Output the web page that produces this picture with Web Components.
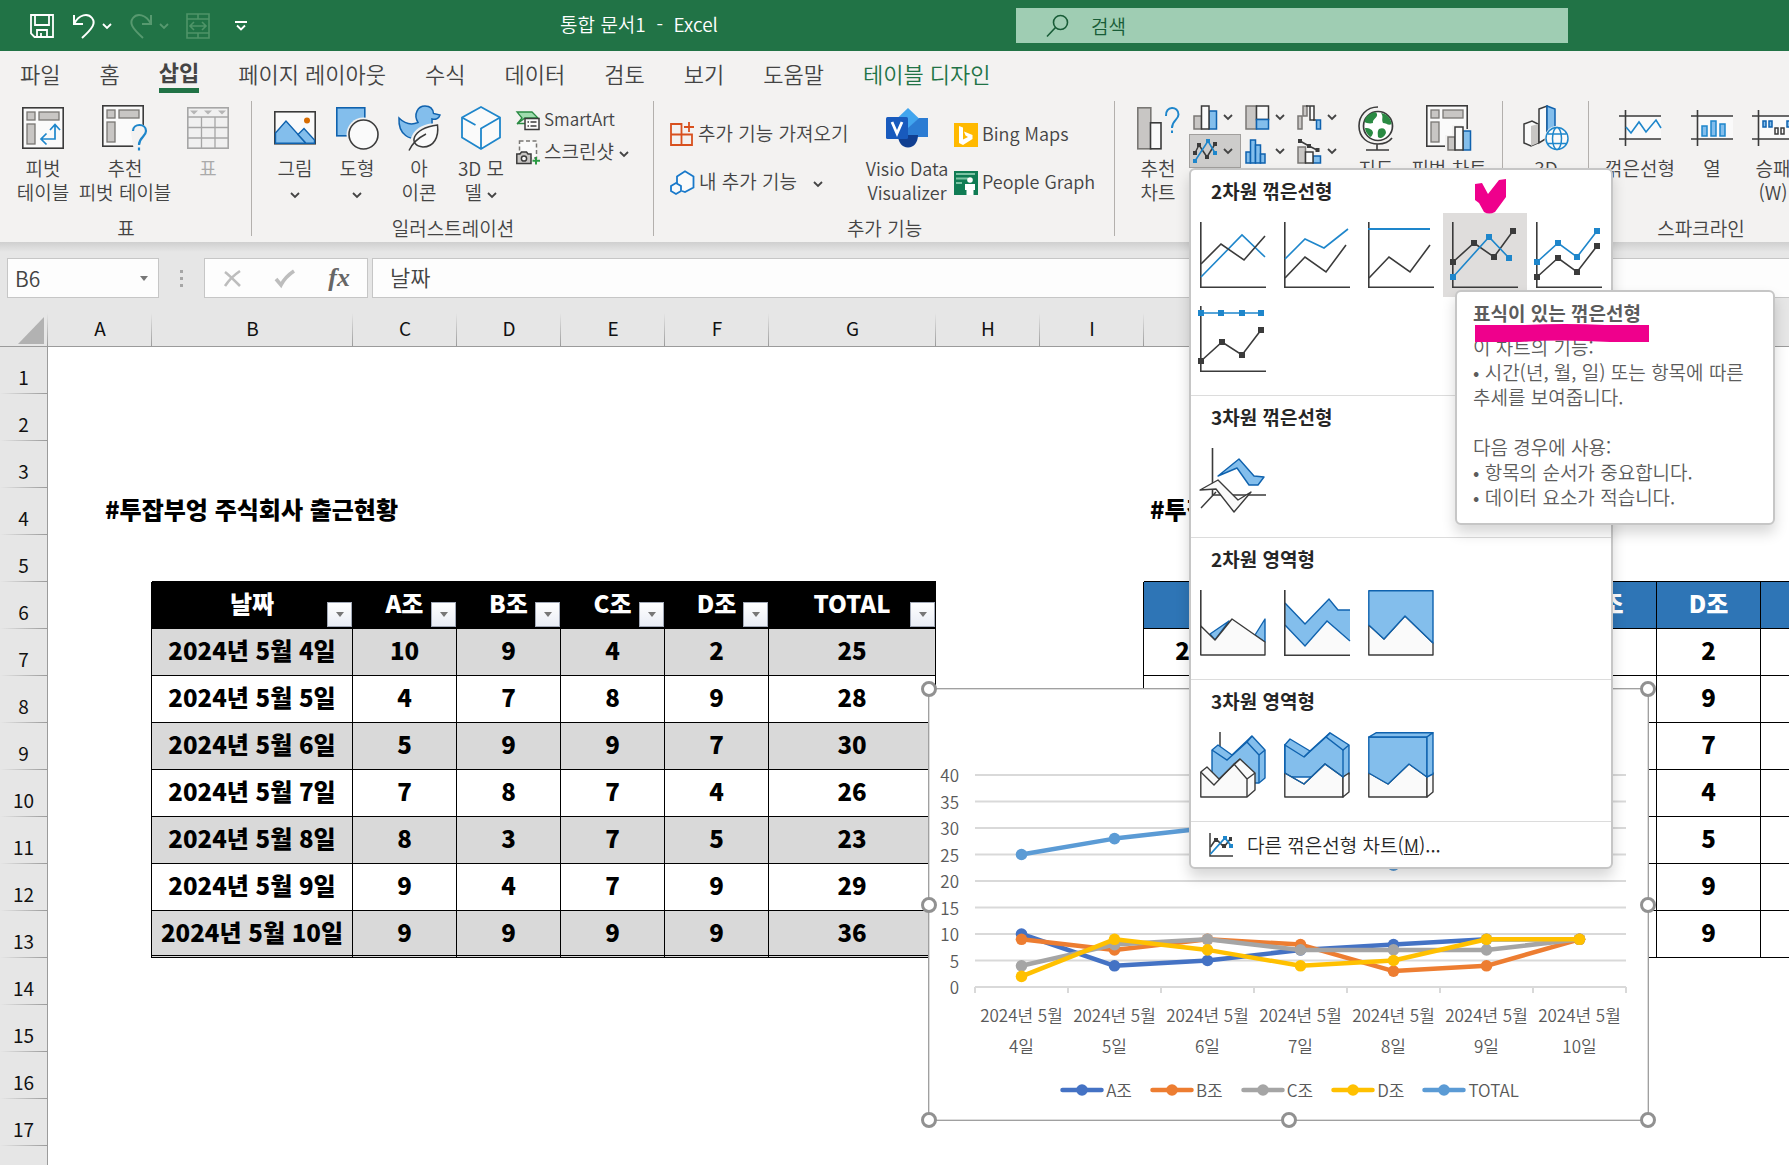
<!DOCTYPE html>
<html lang="ko">
<head>
<meta charset="utf-8">
<title>통합 문서1 - Excel</title>
<style>
  html, body { margin: 0; height: 100%; }
  body { font-family: "Noto Sans CJK KR", "Noto Sans", sans-serif; font-size: 19px; font-weight: 350; color: #444; overflow: hidden; }
</style>
</head>
<body>
<excel-app></excel-app>
<script>
const G = '#3b3b3b', B = '#1e86cb', D = '#0f62ae', F = '#83beec', W = '#fafafa', S = '#c8c6c4';
const sq = (pts, c) => pts.map(([x, y]) => `<rect x="${x - 3}" y="${y - 3}" width="6" height="6" fill="${c}"/>`).join('');
const pl = (pts, c, w = 1.6) => `<polyline points="${pts.map(p => p.join()).join(' ')}" fill="none" stroke="${c}" stroke-width="${w}"/>`;
const pg = (pts, f, c, w = 1.4) => `<polygon points="${pts}" fill="${f}" stroke="${c}" stroke-width="${w}" stroke-linejoin="round"/>`;
const axis = `<path d="M.8 0V65.2H66" fill="none" stroke="${G}" stroke-width="1.6"/>`;
const sheetIcon = `<rect x=".8" y=".8" width="40.4" height="40.4" fill="${W}" stroke="${G}" stroke-width="1.6"/>
  <g fill="${S}" stroke="#797774" stroke-width="1.3"><rect x="5" y="5" width="8" height="8"/><rect x="17" y="5" width="20" height="8"/><rect x="5" y="17" width="8" height="20"/></g>`;

/* name: [width, height, markup] */
const ICONS = {
  chevron: [10, 6, `<path d="M1 1l4 4 4-4" fill="none" stroke="currentColor" stroke-width="1.8"/>`],
  save: [24, 24, `<g fill="none" stroke="#fff" stroke-width="1.8"><path d="M1 1H23V23H4.500L1 19.500Z"/><path d="M5 1V11H19V1M7 23V16H17V23M11 23V19"/></g>`],
  undo: [24, 26, `<g fill="none" stroke="#fff" stroke-width="2"><path d="M2 2V11H11"/><path d="M2 11C7 1 16 0 20 5C24 10 21 15 10 25"/></g>`],
  redo: [24, 26, `<g fill="none" stroke="#57996f" stroke-width="2"><path d="M22 2V11H13"/><path d="M22 11C17 1 8 0 4 5C0 10 3 15 14 25"/></g>`],
  merge: [24, 26, `<g fill="none" stroke="#4f9468" stroke-width="1.6"><path d="M1 1H23V25H1ZM1 6H23M1 20H23M12 1V6M12 20V25"/><path d="M4 13H20M8 9L4 13L8 17M16 9L20 13L16 17"/></g>`],
  qat: [12, 10, `<path d="M0 1H12M2 4.500L6 8.500L10 4.500" fill="none" stroke="#fff" stroke-width="1.800"/>`],
  search: [24, 24, `<g fill="none" stroke="#185c37" stroke-width="1.6"><circle cx="14.500" cy="8.500" r="7"/><path d="M9.500 13.500L1 22.500"/></g>`],
  pivot: [42, 42, sheetIcon + `<g fill="none" stroke="${B}" stroke-width="1.700"><path d="M33 18V32H19M28 23L33 17.500L38 23M24.500 26.500L19 32L24.500 37.500"/></g>`],
  recpivot: [46, 46, sheetIcon + `<path d="M29 28C27 18 45 14 46 28V46H32Z" fill="#f3f2f1"/><g fill="none" stroke="${B}" stroke-width="2.200"><path d="M31 26C31 18 44 18 44 26C44 32 37 32 37 40"/><path d="M37 42.500V45.500"/></g>`],
  table: [42, 42, `<rect x=".8" y=".8" width="40.400" height="40.400" fill="#f0f0f0" stroke="#a6a6a6" stroke-width="1.600"/><path d="M1 10H41M1 20.500H41M1 31H41M14.500 10V41M28 10V41" stroke="#a6a6a6" stroke-width="1.300"/><path d="M3 3.500H11L7 7.500ZM17 3.500H25L21 7.500ZM31 3.500H39L35 7.500Z" fill="#b5b5b5"/>`],
  picture: [42, 34, `<rect x=".8" y=".8" width="40.400" height="32" fill="${W}" stroke="${G}" stroke-width="1.600"/><path d="M1.500 22L12 10L32 32.200H1.500Z" fill="${F}" stroke="${D}" stroke-width="1.400"/><path d="M24 23.500L30 17.500L40.500 29V32.200H32Z" fill="${F}" stroke="${D}" stroke-width="1.400"/><circle cx="33" cy="9.500" r="3" fill="#d86c00"/>`],
  shapes: [43, 43, `<rect x=".8" y=".8" width="28" height="28" fill="${F}" stroke="${D}" stroke-width="1.600"/><circle cx="27.500" cy="27.500" r="17" fill="#f3f2f1"/><circle cx="27.500" cy="27.500" r="14.500" fill="${W}" stroke="${G}" stroke-width="1.600"/>`],
  duck: [43, 46, `<path d="M1 13C8 20 14 20 20 17.500C15 9 20 1 27 1C32 1 35 4 35.500 8.500L42 10C41 13 38 15 34 14C35 21 33 30 24 33C12 36 0 30 1 13Z" fill="${F}" stroke="${D}" stroke-width="1.500"/><path d="M12 44C11 26 22 18 41 18V30C40 43 27 47 18 43Z" fill="#f3f2f1"/><path d="M39.500 20C41 32 36 42 25 42C10 41 13 23 39.500 20Z" fill="${W}" stroke="${G}" stroke-width="1.500"/><path d="M11 45.500C14 39 20 33 28 29" fill="none" stroke="${G}" stroke-width="1.500"/>`],
  cube: [40, 44, `<path d="M20 1L39 11.500V31.500L20 43L1 31.500V11.500Z" fill="${W}"/><path d="M20 1L39 11.500V31.500L20 43L1 31.500V11.500ZM1 11.500L14.500 19M39 11.500L20 22.500V43" fill="none" stroke="${B}" stroke-width="1.800"/>`],
  smartart: [24, 20, `<path d="M1 1H16L22 7H9L1 13L6 7Z" fill="#9fdcae" stroke="#2a8a43" stroke-width="1.300"/><path d="M1 12.500H9" stroke="#2a8a43" stroke-width="1.500"/><rect x="9" y="7.500" width="14" height="11" fill="${W}" stroke="${G}" stroke-width="1.500"/><path d="M11.500 11H13M14.500 11H20.500M11.500 15H13M14.500 15H20.500" stroke="${G}" stroke-width="1.400"/>`],
  shot: [24, 25, `<rect x="3.500" y="1" width="17" height="17" fill="${W}" stroke="#797774" stroke-width="1.500" stroke-dasharray="4 2.500"/><path d="M.8 14H4L5.500 12H10.500L12 14H15V23.500H.8Z" fill="${S}" stroke="${G}" stroke-width="1.500"/><circle cx="8" cy="18.500" r="2.600" fill="${W}" stroke="${G}" stroke-width="1.500"/><path d="M20 17V24.500M16.500 20.800H24" stroke="#2a9a43" stroke-width="2"/>`],
  getaddin: [24, 24, `<g fill="none" stroke="#d8501e" stroke-width="1.800"><path d="M1 2H11.500V23H1ZM1 12.500H22V23H11.500M19 0V10M14 5H24"/></g>`],
  myaddin: [25, 25, `<g fill="${W}" stroke="#1979ca" stroke-width="1.800"><path d="M7 13V6.500L15 1.200L23.500 6.500V17.500L15 22L12 21"/><path d="M6 13L11 16V21L6 24L1 21V16Z"/></g>`],
  visio: [42, 40, `<path d="M22 0L33 10.500L22 21L11 10.500Z" fill="#41a5ee"/><path d="M33 10H42V29H22V20Z" fill="#2b7cd3"/><path d="M14 27H32C32 34 28 39.500 22 39.500C16 39.500 12 34 12 27Z" fill="#103f91"/><rect x="0" y="9" width="22" height="22" rx="1.500" fill="#185abd"/><path d="M6 14L11 25.500L16 14" fill="none" stroke="#fff" stroke-width="2.800"/>`],
  bing: [24, 24, `<rect width="24" height="24" fill="#ffb900"/><path d="M5 3L9 4.500V16.500L14 14L11.500 12.500L10 8.500L18.500 12V16L9 22L5 20Z" fill="#fff"/>`],
  people: [24, 24, `<rect width="24" height="24" fill="#107c54"/><path d="M2 3H21M2 7.500H14M2 12H8" stroke="#7cc3a4" stroke-width="2"/><circle cx="16" cy="9" r="2.800" fill="#fff"/><path d="M11 13H21V19H19.500V24H12.500V19H11Z" fill="#fff"/>`],
  recchart: [43, 43, `<rect x=".8" y=".8" width="13" height="41" fill="${S}" stroke="#797774" stroke-width="1.600"/><rect x="13.500" y="15.800" width="10.500" height="26" fill="${W}" stroke="${G}" stroke-width="1.600"/><g fill="none" stroke="${B}" stroke-width="2"><path d="M29 9C28 -1.500 41.500 -1.500 41.500 7.500C41.500 13 35 13 35 21"/><path d="M35 23.500V26"/></g>`],
  col: [25, 25, `<rect x="1" y="11" width="7.500" height="13" fill="${S}" stroke="#797774" stroke-width="1.500"/><rect x="16" y="6" width="7.500" height="18" fill="${F}" stroke="${D}" stroke-width="1.500"/><rect x="8.500" y="1" width="7.500" height="23" fill="${W}" stroke="${G}" stroke-width="1.500"/>`],
  tree: [25, 25, `<rect x="1" y="1" width="10.500" height="23" fill="${S}" stroke="#797774" stroke-width="1.500"/><rect x="11.500" y="1" width="12" height="13.500" fill="${W}" stroke="${G}" stroke-width="1.500"/><rect x="11.500" y="14.500" width="12" height="9.500" fill="${F}" stroke="${D}" stroke-width="1.500"/>`],
  fall: [25, 25, `<g stroke-width="1.500"><path d="M1 24V11H5V24Z" fill="${S}" stroke="#797774"/><path d="M6 1V11H10V1Z" fill="${S}" stroke="#797774"/><path d="M9 1H17V15H13V1" fill="${W}" stroke="${G}"/><path d="M16 15H19" stroke="${G}"/><rect x="19.500" y="15" width="4" height="9" fill="${F}" stroke="${D}"/></g>`],
  line: [25, 25, pl([[2, 14], [6, 6], [14, 18], [22, 5]], G, 1.5) + pl([[2, 22], [15, 2], [22, 14]], B, 1.5) + [[2, 14], [6, 6], [14, 18], [22, 5]].map(p => `<rect x="${p[0] - 2}" y="${p[1] - 2}" width="4" height="4" fill="${G}"/>`).join('') + [[2, 22], [15, 2], [22, 14]].map(p => `<rect x="${p[0] - 2}" y="${p[1] - 2}" width="4" height="4" fill="${B}"/>`).join('')],
  hist: [25, 25, `<g fill="${F}" stroke="${D}" stroke-width="1.500"><rect x="1" y="13" width="4.500" height="11"/><rect x="5.500" y="1" width="5" height="23"/><rect x="10.500" y="6" width="5" height="18"/><rect x="15.500" y="15" width="4.500" height="9"/></g>`],
  combo: [25, 25, `<rect x="1" y="8" width="7.500" height="16" fill="${S}" stroke="#797774" stroke-width="1.500"/><rect x="16" y="17" width="7.500" height="7" fill="${F}" stroke="${D}" stroke-width="1.500"/><rect x="8.500" y="13" width="7.500" height="11" fill="${W}" stroke="${G}" stroke-width="1.500"/><path d="M3 2L12 7L22 12" fill="none" stroke="${G}" stroke-width="1.500"/><path d="M1 0H5V4H1ZM10 5H14V9H10ZM18.500 9H22.500V13H18.500Z" fill="${G}"/>`],
  globe: [37, 45, `<circle cx="20" cy="20" r="14.500" fill="#fff" stroke="${G}" stroke-width="1.700"/><path d="M9 10C14 6 18 5 19 8C20 12 14 13 15 17C12 18 8 17 6.500 16C7 13 8 11 9 10ZM23 7C29 8 33 12 33.500 18C31 20 28 17 25 17C23 13 26 11 23 7ZM7 22C12 22 15 24 15 27C14 30 13 31 12 31C9 28 7 25 7 22ZM21 23C25 21 28 23 28 27C26 32 22 33 20 31C20 28 19 26 21 23Z" fill="#2a8a43"/><path d="M20 1C8 1 1 10 1 20C1 32 10 38 20 38C27 38 31 36 34 32M19 38V44M8 44H31" fill="none" stroke="${G}" stroke-width="1.600"/>`],
  pivotchart: [46, 46, sheetIcon + `<path d="M19 46V30H26V20H36V24H46V46Z" fill="#f3f2f1"/><rect x="22" y="32" width="7" height="13" fill="${S}" stroke="#797774" stroke-width="1.500"/><rect x="37" y="26" width="7.500" height="19" fill="${F}" stroke="${D}" stroke-width="1.500"/><rect x="29" y="22" width="8" height="23" fill="${W}" stroke="${G}" stroke-width="1.500"/>`],
  map3d: [46, 46, `<path d="M1 19L9 16L15 19V38L8 41L1 38Z" fill="${W}" stroke="${G}" stroke-width="1.500"/><path d="M8 21L15 19V38L8 41Z" fill="${S}"/><path d="M16 4L24 1V33L16 38Z" fill="${W}" stroke="${G}" stroke-width="1.500"/><path d="M24 1L32 4V32L24 35Z" fill="${F}" stroke="${D}" stroke-width="1.500"/><circle cx="34" cy="33.500" r="12.500" fill="#f3f2f1"/><g fill="${W}" stroke="${B}" stroke-width="1.500"><circle cx="34" cy="33.500" r="11"/><ellipse cx="34" cy="33.500" rx="4.500" ry="11"/><path d="M24.500 29H43.500M24.500 38.500H43.500"/></g>`],
  spline: [42, 38, `<rect x="6" y="7" width="36" height="23" fill="${W}"/><path d="M6.500 1V37M0 7H42M0 30H42" stroke="${G}" stroke-width="1.600"/><path d="M7 18L12 24L20 13L27 23L37 11L42 19" fill="none" stroke="${B}" stroke-width="1.600"/>`],
  spcol: [42, 38, `<rect x="6" y="7" width="36" height="23" fill="${W}"/><path d="M6.500 1V37M0 7H42M0 30H42" stroke="${G}" stroke-width="1.600"/><g fill="${F}" stroke="${B}" stroke-width="1.500"><rect x="11" y="17" width="5" height="10"/><rect x="20" y="12" width="5" height="15"/><rect x="29" y="15" width="5" height="12"/></g>`],
  spwin: [42, 38, `<rect x="6" y="7" width="36" height="23" fill="${W}"/><path d="M6.500 1V37M0 7H42M0 30H42" stroke="${G}" stroke-width="1.600"/><g fill="${F}" stroke="${D}" stroke-width="1.500"><rect x="11" y="12" width="3" height="6"/><rect x="17" y="12" width="3" height="6"/><rect x="35" y="12" width="3" height="6"/></g><g fill="${W}" stroke="${G}" stroke-width="1.500"><rect x="23" y="19" width="3" height="6"/><rect x="29" y="19" width="3" height="6"/></g>`],
  cancel: [19, 17, `<path d="M2 2C6 5 12 11 17 16M17 1C11 5 6 10 2 16" fill="none" stroke="#bdbdbd" stroke-width="2.600"/>`],
  enter: [20, 17, `<path d="M1 9L6 15C9 9 13 5 19 1" fill="none" stroke="#bdbdbd" stroke-width="3.600"/>`],
  drop: [8, 5, `<path d="M0 0H8L4 5Z" fill="#777"/>`],
  corner: [26, 27, `<path d="M26 0V27H0Z" fill="#b2b2b2"/>`],
  gLine: [66, 66, axis + pl([[1, 55], [42, 13], [65, 35]], B) + pl([[1, 42], [21, 22], [44, 38], [65, 14]], G)],
  gStack: [66, 66, axis + pl([[1, 37], [21, 17], [40, 26], [64, 7]], B) + pl([[1, 56], [21, 35], [42, 50], [62, 23]], G)],
  gFull: [66, 66, axis + pl([[0, 7], [62, 7]], B, 2) + pl([[1, 56], [21, 35], [42, 50], [62, 23]], G)],
  gLineM: [66, 66, axis + pl([[1, 40], [22, 21], [42, 35], [61, 9]], G) + pl([[1, 55], [37, 15], [57, 36]], B) + sq([[1, 40], [22, 21], [42, 35], [61, 9]], G) + sq([[1, 55], [37, 15], [57, 36]], B)],
  gStackM: [66, 66, axis + pl([[1, 40], [22, 21], [41, 35], [61, 9]], B) + pl([[1, 55], [22, 36], [41, 50], [61, 24]], G) + sq([[1, 40], [22, 21], [41, 35], [61, 9]], B) + sq([[1, 55], [22, 36], [41, 50], [61, 24]], G)],
  gFullM: [66, 66, axis + pl([[1, 7], [61, 7]], B) + pl([[1, 55], [22, 36], [42, 49], [61, 24]], G) + sq([[1, 7], [21, 7], [42, 7], [61, 7]], B) + sq([[1, 55], [22, 36], [42, 49], [61, 24]], G)],
  g3dLine: [66, 66, `<path d="M12.500 0V47H66" fill="none" stroke="${G}" stroke-width="1.600"/>` + pg('18,28 39,11 54,28 64,29 58,37 49,37 37,20', F, D) + `<path d="M1 60L16 44" stroke="${G}" stroke-width="1.400"/>` + pg('0,42 18,32 38,52 51,44 34,64 16,41', W, G)],
  gArea: [66, 66, `<path d="M.8 0V65" stroke="${G}" stroke-width="1.600"/>` + pg('10,44 29,31 15,50', F, D) + pg('55,45 65,29 65,52', F, D) + pg('.8,36 15,50 32,29 65,52 65,65 .8,65', W, G)],
  gAreaS: [66, 66, `<path d="M1 35L21 56L43 31L66 51V65H1Z" fill="${W}"/><path d="M1 13L21 34L45 9L54 20H66V51L43 31L21 56L1 35Z" fill="${F}"/>` + pl([[1, 13], [21, 34], [45, 9], [54, 20], [66, 20]], D, 1.4) + pl([[1, 35], [21, 56], [43, 31], [66, 51]], D, 1.4) + axis],
  gAreaF: [66, 66, pg('.8,35 16,49 37,26 65,53 65,65 .8,65', W, G) + pg('.8,.8 65,.8 65,53 37,26 16,49 .8,35', F, D)],
  g3dArea: [66, 66, `<path d="M20 0V16" stroke="${G}" stroke-width="1.500"/>` + pg('12,18 18,13 32,23 52,4 65,18 65,46 59,51 12,51', F, D) + pl([[12, 18], [27, 28], [47, 10], [59, 23], [59, 51]], D, 1.4) + pl([[47, 10], [52, 4]], D, 1.4) + pl([[59, 23], [65, 18]], D, 1.4) + pg('.8,40 7,35 19,47 40,27 55,41 55,58 47,65 .8,65', W, G) + pl([[0.8, 40], [14, 53], [34, 32], [47, 47], [47, 65]], G, 1.4) + pl([[34, 32], [40, 27]], G, 1.4) + pl([[47, 47], [55, 41]], G, 1.4)],
  g3dAreaS: [66, 66, pg('.8,13 6,7 26,19 46,.8 65,13 65,42 59,45 .8,45', F, D) + pg('.8,41 20,52 41,32 59,45 59,65 .8,65', W, G) + pg('59,45 65,41 65,60 59,65', W, G) + pl([[0.8, 41], [20, 52], [41, 32], [59, 45], [59, 18]], D, 1.4) + pl([[0.8, 41], [0.8, 13], [20, 25], [42, 5], [59, 18], [65, 13]], D, 1.4) + pl([[42, 5], [46, 1]], D, 1.4) + pl([[20, 25], [26, 19]], D, 1.4)],
  g3dAreaF: [66, 66, pg('.8,41 20,52 41,32 59,45 59,65 .8,65', W, G) + pg('59,45 65,41 65,60 59,65', W, G) + pg('.8,5 59,5 59,45 41,32 20,52 .8,41', F, D) + pg('.8,5 8,.8 65,.8 59,5', F, D) + pg('59,5 65,.8 65,42 59,45', F, D)],
  more: [24, 24, `<path d="M1 0V23H24" fill="none" stroke="${G}" stroke-width="1.500"/>` + pl([[1.5, 14], [7, 6], [15, 14], [22, 5]], G, 1.6) + pl([[1.5, 21], [16, 5], [23, 14]], B, 1.8) + `<path d="M5 5H9V9H5ZM13 11H17V15H13ZM20 4H23V8H20Z" fill="${G}"/><path d="M14 3H18V7H14ZM20 11H24V15H20Z" fill="${B}"/>`],
};

const define = (name, html, setup) => {
  const tpl = document.createElement('template');
  tpl.innerHTML = html;
  customElements.define(name, class extends HTMLElement {
    connectedCallback() {
      if (this.shadowRoot) return;
      const root = this.attachShadow({ mode: 'open' });
      root.append(tpl.content.cloneNode(true));
      if (setup) setup.call(this, root);
    }
  });
};

define('x-icon', `<style>:host{display:inline-block;flex:none;line-height:0;vertical-align:middle}svg{display:block;overflow:visible}</style>`, function (root) {
  const [w, h, m] = ICONS[this.getAttribute('name')];
  root.innerHTML += `<svg width="${w}" height="${h}" viewBox="0 0 ${w} ${h}" aria-hidden="true">${m}</svg>`;
});

const placeIcon = function (root) {
  root.querySelector('.ic').innerHTML = `<x-icon name="${this.getAttribute('icon')}"></x-icon>`;
};

const btnReset = `button{all:unset;box-sizing:border-box;font:inherit;color:inherit;cursor:default}`;

define('title-bar', `
<style>
  :host{display:flex;height:51px;background:#217346;color:#fff;align-items:center}
  ${btnReset}
  .qat{display:flex;align-items:center;width:262px;box-sizing:border-box;padding-left:30px}
  .qat button{display:flex;align-items:center;gap:6px}
  .qat .save{margin-right:18px}.qat .split{margin-right:17px}.qat .merge{margin-right:25px}
  .dim{color:#57996f}
  .name{flex:1;text-align:center;line-height:24px;white-space:pre;padding-bottom:4px}
  label{display:flex;align-items:center;gap:21px;width:552px;height:35px;box-sizing:border-box;padding-left:30px;margin-right:221px;background:#9fcdb3}
  input{all:unset;flex:1;font:inherit;line-height:28px;color:#185c37}
  input::placeholder{color:#185c37;opacity:1}
</style>
<div class="qat">
  <button class="save" aria-label="저장"><x-icon name="save"></x-icon></button>
  <button class="split" aria-label="실행 취소"><x-icon name="undo"></x-icon><x-icon name="chevron"></x-icon></button>
  <button class="split dim" aria-label="다시 실행"><x-icon name="redo"></x-icon><x-icon name="chevron"></x-icon></button>
  <button class="merge" aria-label="병합"><x-icon name="merge"></x-icon></button>
  <button aria-label="사용자 지정"><x-icon name="qat"></x-icon></button>
</div>
<div class="name">통합 문서1 &nbsp;- &nbsp;Excel</div>
<label><x-icon name="search"></x-icon><input type="search" placeholder="검색" aria-label="검색"></label>`);

define('ribbon-tabs', `
<style>
  :host{display:flex;gap:39px;height:46px;padding-left:20px;background:#f3f2f1;font-size:22px;line-height:32px;white-space:nowrap}
  ${btnReset}
  button{height:42px;padding-top:2px}
  .on{font-weight:700;border-bottom:5px solid #217346}
  .ctx{color:#217346}
</style>
<button>파일</button><button>홈</button><button class="on">삽입</button><button>페이지 레이아웃</button><button>수식</button><button>데이터</button><button>검토</button><button>보기</button><button>도움말</button><button class="ctx">테이블 디자인</button>`);

define('ribbon-group', `
<style>
  :host{display:flex;flex-direction:column;flex:none;box-sizing:border-box;position:relative;padding:0 var(--pad,12px)}
  :host(:not([last]))::after{content:"";position:absolute;right:0;top:4px;bottom:6px;width:1px;background:#b3b0ad}
  .body{display:flex;height:119px}
  .label{text-align:center;line-height:24px}
</style>
<div class="body"><slot></slot></div><div class="label"></div>`, function (root) {
  root.querySelector('.label').textContent = this.getAttribute('label') || '\u00a0';
});

define('big-button', `
<style>
  :host{display:block;flex:none}
  :host([off]){color:#aaa}
  ${btnReset}
  button{display:flex;flex-direction:column;align-items:center;width:100%;text-align:center;line-height:24px;white-space:nowrap}
  .ic{display:flex;align-items:center;justify-content:center;height:46px;padding:8px 0 5px}
</style>
<button><span class="ic"></span><span><slot></slot></span></button>`, placeIcon);

define('row-button', `
<style>
  :host{display:block}
  ${btnReset}
  button{display:flex;align-items:center;gap:4px;height:100%;padding-left:4px;white-space:nowrap;line-height:24px}
</style>
<button><span class="ic"></span><span><slot></slot></span></button>`, placeIcon);

define('chart-types', `
<style>
  :host{display:grid;grid-template-columns:repeat(3,52px);grid-auto-rows:34px;align-content:start;padding-top:3px}
  ${btnReset}
  button{display:flex;align-items:center;gap:5px;padding-left:4px}
  .on{background:#cdcccb;border:1px solid #a19f9d;padding-left:3px}
</style>
<button aria-label="세로 막대형"><x-icon name="col"></x-icon><x-icon name="chevron"></x-icon></button>
<button aria-label="계층 구조"><x-icon name="tree"></x-icon><x-icon name="chevron"></x-icon></button>
<button aria-label="폭포"><x-icon name="fall"></x-icon><x-icon name="chevron"></x-icon></button>
<button class="on" aria-label="꺾은선형"><x-icon name="line"></x-icon><x-icon name="chevron"></x-icon></button>
<button aria-label="통계"><x-icon name="hist"></x-icon><x-icon name="chevron"></x-icon></button>
<button aria-label="콤보"><x-icon name="combo"></x-icon><x-icon name="chevron"></x-icon></button>`);

define('ribbon-bar', `
<style>
  :host{display:flex;height:145px;background:#f3f2f1;overflow:hidden}
  .stack{display:flex;flex-direction:column}
  .tight{padding-top:6px}.tight row-button{height:32px}
  .wide{padding-top:12px}.wide row-button{height:48px}
  .c3{width:142px;margin-right:-12px}.c4{width:198px}.c5{width:153px}
  .w62{width:62px}.w64{width:64px}.w84{width:84px}.w86{width:86px}.w102{width:102px}.w60{width:60px}
  .s17{font-size:17px}.s18{font-size:18px}
</style>
<ribbon-group label="표">
  <big-button class="w62" icon="pivot">피벗<br>테이블</big-button>
  <big-button class="w102" icon="recpivot">추천<br>피벗 테이블</big-button>
  <big-button class="w64" icon="table" off>표</big-button>
</ribbon-group>
<ribbon-group label="일러스트레이션">
  <big-button class="w62" icon="picture">그림<br><x-icon name="chevron"></x-icon></big-button>
  <big-button class="w62" icon="shapes">도형<br><x-icon name="chevron"></x-icon></big-button>
  <big-button class="w62" icon="duck">아<br>이콘</big-button>
  <big-button class="w62" icon="cube">3D 모<br>델 <x-icon name="chevron"></x-icon></big-button>
  <div class="stack tight c3"><row-button class="s17" icon="smartart">SmartArt</row-button><row-button icon="shot">스크린샷 <x-icon name="chevron"></x-icon></row-button></div>
</ribbon-group>
<ribbon-group label="추가 기능">
  <div class="stack wide c4"><row-button icon="getaddin">추가 기능 가져오기</row-button><row-button icon="myaddin">내 추가 기능 &nbsp; <x-icon name="chevron"></x-icon></row-button></div>
  <big-button class="w86 s18" icon="visio">Visio Data<br>Visualizer</big-button>
  <div class="stack wide c5 s18"><row-button icon="bing">Bing Maps</row-button><row-button icon="people">People Graph</row-button></div>
</ribbon-group>
<ribbon-group>
  <big-button class="w62" icon="recchart">추천<br>차트</big-button>
  <chart-types></chart-types>
  <big-button class="w62" icon="globe">지도</big-button>
  <big-button class="w84" icon="pivotchart">피벗 차트</big-button>
</ribbon-group>
<ribbon-group>
  <big-button class="w62" icon="map3d">3D</big-button>
</ribbon-group>
<ribbon-group label="스파크라인" last style="--pad:9px">
  <big-button class="w84" icon="spline">꺾은선형</big-button>
  <big-button class="w60" icon="spcol">열</big-button>
  <big-button class="w62" icon="spwin">승패<br>(W)</big-button>
</ribbon-group>`);

define('formula-bar', `
<style>
  :host{display:flex;height:71px;box-sizing:border-box;padding:16px 0 15px 7px;background:linear-gradient(#cfcfcf,#e6e6e6 10px);color:#444}
  ${btnReset}
  button{display:flex}
  input{all:unset;box-sizing:border-box;font:inherit;min-width:0;flex:1}
  .box{display:flex;align-items:center;box-sizing:border-box;border:1px solid #c6c6c6;background:#fdfdfd}
  .name{width:152px;padding:0 10px 0 7px;font-size:21px}
  .dots{display:flex;flex-direction:column;justify-content:center;gap:4px;width:45px;align-items:center}
  .dots i{width:3px;height:3px;background:#a6a6a6}
  .tools{width:164px;justify-content:space-between;padding:0 17px 0 18px}
  .fx{font:italic 700 26px/30px "Liberation Serif",serif;color:#666}
  .val{flex:1;margin-left:4px;padding:0 0 4px 17px;font-size:22px;border-right:0}
</style>
<div class="box name"><input aria-label="이름 상자" value="B6"><x-icon name="drop"></x-icon></div>
<div class="dots"><i></i><i></i><i></i></div>
<div class="box tools"><button aria-label="취소"><x-icon name="cancel"></x-icon></button><button aria-label="입력"><x-icon name="enter"></x-icon></button><button class="fx" aria-label="함수 삽입">fx</button></div>
<div class="box val"><input aria-label="수식 입력줄" value="날짜"></div>`);

const COLS = [['A', 104], ['B', 201], ['C', 104], ['D', 104], ['E', 104], ['F', 104], ['G', 167], ['H', 104], ['I', 104], ['J', 231], ['K', 74], ['L', 104], ['M', 104], ['N', 104], ['', 167]];
const HEAD = ['날짜', 'A조', 'B조', 'C조', 'D조', 'TOTAL'];
const DATA = [[4, 10, 9, 4, 2, 25], [5, 4, 7, 8, 9, 28], [6, 5, 9, 9, 7, 30], [7, 7, 8, 7, 4, 26], [8, 8, 3, 7, 5, 23], [9, 9, 4, 7, 9, 29], [10, 9, 9, 9, 9, 36]];

define('sheet-grid', `
<style>
  :host{display:block;position:relative;flex:1;min-height:0;overflow:hidden;background:#fff}
  table{border-collapse:separate;border-spacing:0;table-layout:fixed;width:0}
  th,td{box-sizing:border-box;padding:0;text-align:center;white-space:nowrap;overflow:visible}
  thead th{height:34px;font-weight:400;color:#111;line-height:26px;padding-bottom:4px;border-bottom:1px solid #9b9b9b;background:linear-gradient(#e6e6e6,#9b9b9b) right/1px 100% no-repeat #e6e6e6}
  thead th:first-child{text-align:right;padding:0 4px 0 0}
  tbody tr{height:47px}
  tbody th.r{font-weight:400;color:#111;line-height:24px;vertical-align:bottom;padding-bottom:5px;border-right:1px solid #9b9b9b;background:linear-gradient(90deg,#e6e6e6,#9b9b9b) bottom/100% 1px no-repeat #e6e6e6}
  .t{font-size:24px;line-height:40px;font-weight:900;color:#000;position:relative;padding-bottom:5px}
  .title{text-align:left;padding-left:57px}
  .title2{text-align:left;padding-left:6px}
  .c{border-right:1px solid #000;border-bottom:1px solid #000}
  .lead{border-right:1px solid #000}
  .h1{background:#000;color:#fff}
  .h2{background:#2e75b6;color:#fff}
  .top{border-bottom:1px solid #000}
  .band{background:#d9d9d9}
  .end{border-bottom:3px double #000;padding-bottom:3px}
  button{all:unset;position:absolute;right:0;bottom:1px;width:25px;height:25px;box-sizing:border-box;border:1px solid #a3aab8;background:linear-gradient(#fff,#e9edf5);display:flex;align-items:center;justify-content:center}
</style>
<table><colgroup></colgroup><thead></thead><tbody></tbody></table><slot></slot>`, function (root) {
  root.querySelector('colgroup').innerHTML = '<col style="width:48px">' + COLS.map(c => `<col style="width:${c[1]}px">`).join('');
  root.querySelector('thead').innerHTML = '<tr><th><x-icon name="corner"></x-icon></th>' + COLS.map(c => `<th>${c[0]}</th>`).join('') + '</tr>';
  let out = '';
  for (let r = 1; r <= 18; r++) {
    out += `<tr><th class="r">${r < 18 ? r : ''}</th>`;
    for (let c = 0; c < COLS.length; c++) {
      const left = c >= 1 && c <= 6, right = c >= 9;
      const k = left ? c - 1 : c - 9;
      /* values behind the floating chart and past the last full column stay blank */
      const blank = c === 14 || (r >= 8 && c >= 9 && c <= 12);
      if (r === 4 && c === 0) out += '<td class="t title">#투잡부엉 주식회사 출근현황</td>';
      else if (r === 4 && c === 9) out += '<td class="t title2">#투잡부엉 주식회사 출근현황</td>';
      else if (r === 5 && (left || right)) out += '<td class="top"></td>';
      else if (r >= 6 && r <= 13 && (c === 0 || c === 8)) out += '<td class="lead"></td>';
      else if (r === 6 && left) out += `<th class="t c h1">${HEAD[k]}<button aria-label="필터"><x-icon name="drop"></x-icon></button></th>`;
      else if (r === 6 && right) out += `<th class="t c h2">${blank ? '' : HEAD[k]}</th>`;
      else if (r >= 7 && r <= 13 && (left || right)) {
        const v = DATA[r - 7][k];
        out += `<td class="t c${left && r % 2 ? ' band' : ''}${left && r === 13 ? ' end' : ''}">${blank ? '' : k ? v : `2024년 5월 ${v}일`}</td>`;
      } else out += '<td></td>';
    }
    out += '</tr>';
  }
  root.querySelector('tbody').innerHTML = out;
});

const SERIES = [['A조', '#4472c4'], ['B조', '#ed7d31'], ['C조', '#a5a5a5'], ['D조', '#ffc000'], ['TOTAL', '#5b9bd5']];

define('line-chart', `
<style>
  :host{display:flex;flex-direction:column;position:absolute;left:928px;top:375px;width:721px;height:433px;box-sizing:border-box;background:#fff;border:1px solid #a0a0a0;box-shadow:inset 0 0 0 1px #ddd;color:#595959;font-size:17px;padding:73px 21px 0 0}
  .plot{display:flex;gap:16px}
  .y{width:30px;text-align:right;display:flex;flex-direction:column;justify-content:space-between;height:238px;line-height:26px}
  .y span{height:26px}
  .plot svg{display:block;margin-top:12px;overflow:visible}
  .x{display:grid;grid-template-columns:repeat(7,93px);margin:-1px 0 0 46px;text-align:center;line-height:31px}
  .legend{display:flex;justify-content:center;gap:18px;margin:15px 0 0 23px;line-height:28px}
  .legend span{display:flex;align-items:center;gap:2px}
  .h{position:absolute;width:10px;height:10px;border:3px solid #919191;border-radius:50%;background:#fff;transform:translate(-50%,-50%)}
</style>
<div class="plot"><div class="y"></div><svg width="651" height="220" viewBox="0 0 651 220"></svg></div>
<div class="x"></div><div class="legend"></div>`, function (root) {
  const y = v => 213 - v * 5.3, x = i => 46.5 + i * 93;
  let s = '', ys = '';
  for (let v = 40; v >= 0; v -= 5) {
    ys += `<span>${v}</span>`;
    s += `<path d="M0 ${y(v)}H651" stroke="#d9d9d9" stroke-width="2"/>`;
  }
  for (let i = 0; i <= 7; i++) s += `<path d="M${i * 93} 213V219" stroke="#d9d9d9" stroke-width="2"/>`;
  SERIES.forEach(([, c], k) => {
    s += `<polyline points="${DATA.map((d, i) => x(i) + ',' + y(d[k + 1])).join(' ')}" fill="none" stroke="${c}" stroke-width="4.500" stroke-linejoin="round"/>`;
    s += DATA.map((d, i) => `<circle cx="${x(i)}" cy="${y(d[k + 1])}" r="5.800" fill="${c}"/>`).join('');
  });
  root.querySelector('.y').innerHTML = ys;
  root.querySelector('svg').innerHTML = s;
  root.querySelector('.x').innerHTML = DATA.map(d => `<span>2024년 5월<br>${d[0]}일</span>`).join('');
  root.querySelector('.legend').innerHTML = SERIES.map(([n, c]) => `<span><svg width="44" height="12"><path d="M2.500 6H41.500" stroke="${c}" stroke-width="4.500" stroke-linecap="round"/><circle cx="22" cy="6" r="5.800" fill="${c}"/></svg>${n}</span>`).join('');
  for (const [l, t] of [[0, 0], [50, 0], [100, 0], [0, 50], [100, 50], [0, 100], [50, 100], [100, 100]]) {
    const h = document.createElement('i');
    h.className = 'h';
    h.style.left = l + '%';
    h.style.top = t + '%';
    root.append(h);
  }
});

define('gallery-section', `
<style>
  :host{display:block;padding:6px 0 14px;border-bottom:1px solid #dcdcdc}
  h3{margin:0;padding-left:20px;font-size:19px;line-height:30px;font-weight:700;color:#262626;height:37px}
  .tiles{display:grid;grid-template-columns:repeat(5,84px)}
  ${btnReset}
  button{height:84px;padding:9px}
  .on{background:#dfdddc}
</style>
<h3></h3><div class="tiles"></div>`, function (root) {
  root.querySelector('h3').textContent = this.getAttribute('label');
  root.querySelector('.tiles').innerHTML = this.getAttribute('icons').split(' ').map(n => `<button class="${n === 'gLineM' ? 'on' : ''}" aria-label="${this.getAttribute('label')}"><x-icon name="${n}"></x-icon></button>`).join('');
});

define('chart-gallery', `
<style>
  :host{display:block;position:absolute;left:1189px;top:168px;width:424px;box-sizing:border-box;background:#fff;border:2px solid #c6c6c6;border-radius:6px;box-shadow:0 8px 14px rgba(0,0,0,.16)}
  ${btnReset}
  .more{display:flex;align-items:center;gap:14px;height:45px;padding:0 0 0 18px;line-height:28px;color:#262626;width:100%;white-space:nowrap}
  .check{position:absolute;left:284px;top:9px}
</style>
<gallery-section label="2차원 꺾은선형" icons="gLine gStack gFull gLineM gStackM gFullM"></gallery-section>
<gallery-section label="3차원 꺾은선형" icons="g3dLine"></gallery-section>
<gallery-section label="2차원 영역형" icons="gArea gAreaS gAreaF"></gallery-section>
<gallery-section label="3차원 영역형" icons="g3dArea g3dAreaS g3dAreaF"></gallery-section>
<button class="more"><x-icon name="more"></x-icon><span>다른 꺾은선형 차트(<u>M</u>)...</span></button>
<svg class="check" width="32" height="35" viewBox="0 0 32 35" aria-hidden="true"><path d="M0 5L7 4L13 15L24 1L31 0V18L20 33Q14 36 9 33L4 24L0 21Z" fill="#ef008c"/></svg>`);

define('screen-tip', `
<style>
  :host{display:block;position:absolute;left:1455px;top:290px;width:320px;height:235px;box-sizing:border-box;background:#fff;border:2px solid #c6c6c6;border-radius:6px;box-shadow:0 8px 14px rgba(0,0,0,.16);padding:8px 0 0 16px;color:#5c5c5c;line-height:25px;white-space:nowrap}
  h4{margin:0 0 9px;font-size:19px;font-weight:700;line-height:25px}
  p{margin:0 0 25px}
  svg{position:absolute;left:18px;top:32px}
</style>
<h4>표식이 있는 꺾은선형</h4>
<p>이 차트의 기능:<br>• 시간(년, 월, 일) 또는 항목에 따른<br>추세를 보여줍니다.</p>
<p>다음 경우에 사용:<br>• 항목의 순서가 중요합니다.<br>• 데이터 요소가 적습니다.</p>
<svg width="174" height="18" viewBox="0 0 174 18" aria-hidden="true"><path d="M0 1L50 1Q90 -1 130 1H174V18H135Q85 15 45 18H0Z" fill="#ef008c"/></svg>`);

define('excel-app', `
<style>:host{display:flex;flex-direction:column;position:relative;height:100vh;overflow:hidden;background:#fff}</style>
<title-bar></title-bar>
<ribbon-tabs></ribbon-tabs>
<ribbon-bar></ribbon-bar>
<formula-bar></formula-bar>
<sheet-grid><line-chart></line-chart></sheet-grid>
<chart-gallery></chart-gallery>
<screen-tip></screen-tip>`);
</script>
</body>
</html>
